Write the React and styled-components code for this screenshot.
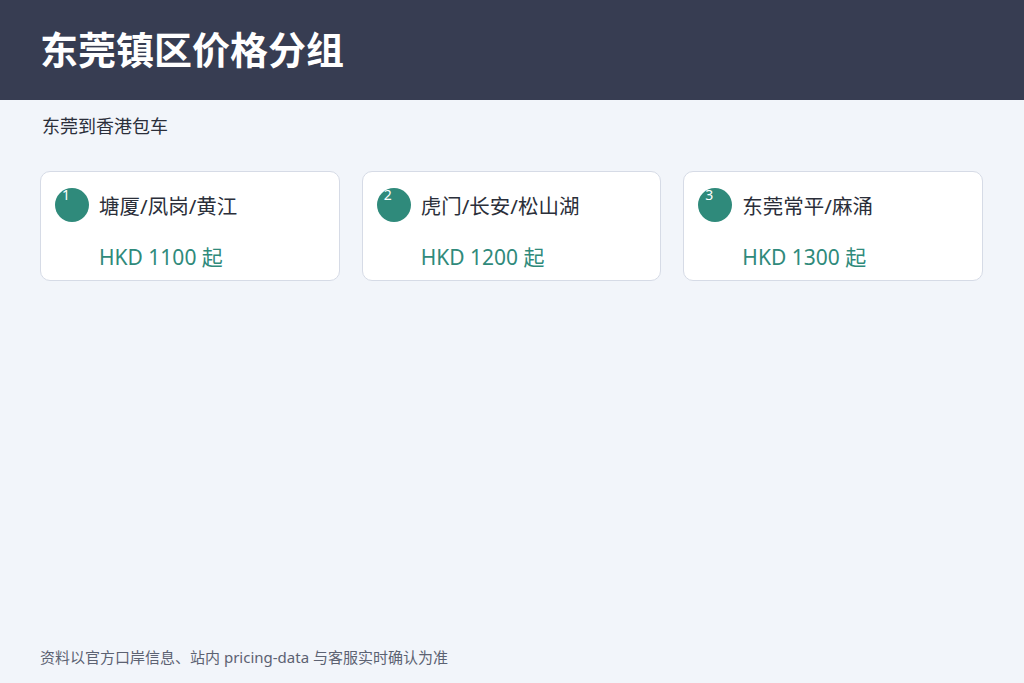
import React from "react";
import styled, { createGlobalStyle } from "styled-components";

const groups = [
  { no: 1, name: "塘厦/凤岗/黄江", price: "HKD 1100 起" },
  { no: 2, name: "虎门/长安/松山湖", price: "HKD 1200 起" },
  { no: 3, name: "东莞常平/麻涌", price: "HKD 1300 起" },
];

const App = () => (
  <>
    <Global />
    <Page>
      <Header>
        <Title>东莞镇区价格分组</Title>
      </Header>
      <Main>
        <Subtitle>东莞到香港包车</Subtitle>
        <Cards>
          {groups.map((g) => (
            <Card key={g.no}>
              <Row>
                <Badge>{g.no}</Badge>
                <Name>{g.name}</Name>
              </Row>
              <Price>{g.price}</Price>
            </Card>
          ))}
        </Cards>
      </Main>
      <Footer>资料以官方口岸信息、站内 pricing-data 与客服实时确认为准</Footer>
    </Page>
  </>
);

const Global = createGlobalStyle`
  body {
    margin: 0;
    background: #f2f5fa;
    font-family: "Noto Sans", "Noto Sans CJK SC", sans-serif;
  }
`;

const Page = styled.div`
  height: 683px;
  display: flex;
  flex-direction: column;
`;

const Header = styled.header`
  height: 100px;
  background: #373d52;
  display: flex;
  align-items: center;
  padding: 0 40px;
  box-sizing: border-box;
`;

const Title = styled.h1`
  margin: 0;
  color: #fff;
  font-size: 38px;
  font-weight: 700;
  padding-bottom: 6px;
`;

const Main = styled.main`
  flex: 1;
  padding: 13px 41px 0 40px;
`;

const Subtitle = styled.div`
  font-size: 18px;
  color: #2b2f3a;
  padding-left: 2px;
  line-height: 26px;
`;

const Cards = styled.div`
  display: grid;
  grid-template-columns: repeat(3, 1fr);
  gap: 22px;
  margin-top: 32px;
`;

const Card = styled.div`
  height: 110px;
  box-sizing: border-box;
  background: #fff;
  border: 1px solid #d6dbe6;
  border-radius: 10px;
  padding: 16px 14px 0;
`;

const Row = styled.div`
  display: flex;
  align-items: center;
  gap: 10px;
`;

const Badge = styled.div`
  width: 34px;
  height: 34px;
  flex: none;
  border-radius: 50%;
  background: #2f8a7b;
  color: #fff;
  font-size: 14px;
  line-height: 14px;
  padding: 0 0 0 7px;
  box-sizing: border-box;
`;

const Name = styled.div`
  font-size: 20.5px;
  color: #2b2f3a;
`;

const Price = styled.div`
  margin: 19px 0 0 44px;
  font-size: 21px;
  color: #2f8a7b;
`;

const Footer = styled.footer`
  padding: 0 40px 16px;
  font-size: 15px;
  color: #5c6272;
`;

export default App;
